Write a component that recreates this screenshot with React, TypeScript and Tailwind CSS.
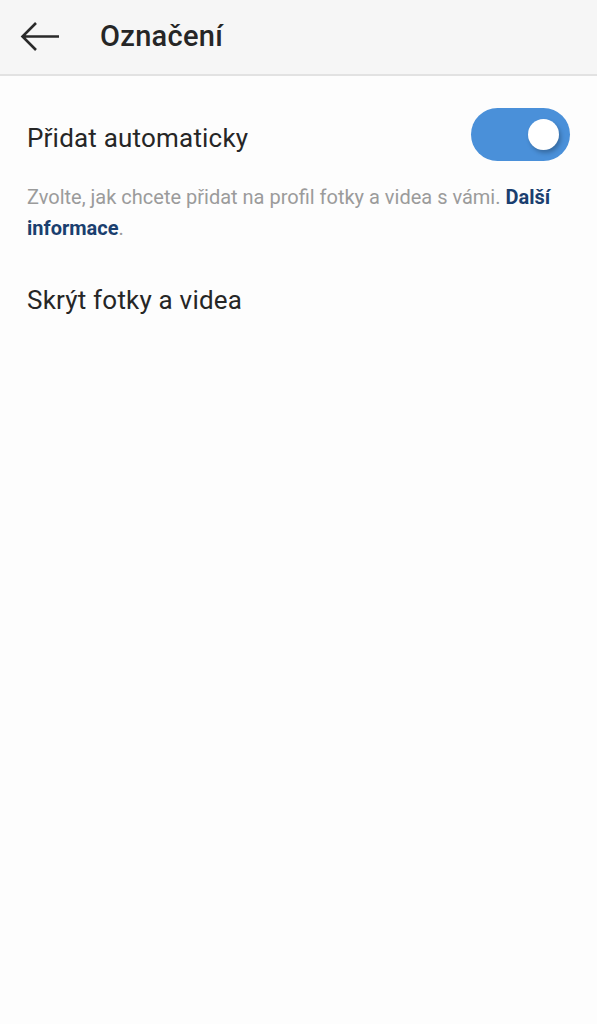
export default function App() {
  return (
    <div className="min-h-[1024px] bg-[#fdfdfd] font-['Roboto',sans-serif]">
      <header className="flex h-[76px] items-center bg-[#f6f6f6] border-b-2 border-[#e2e2e2]">
        <button className="ml-[18px] flex h-[40px] w-[44px] items-center justify-center">
          <svg width="42" height="32" viewBox="0 0 42 32" fill="none">
            <path d="M40 15.5H4M17 2L3.5 15.5L17 29" stroke="#2a2a2a" strokeWidth="2.6" />
          </svg>
        </button>
        <h1 className="ml-[38px] text-[29px] font-medium tracking-[0.3px] text-[#262626]">Označení</h1>
      </header>

      <div className="px-[27px]">
        <div className="flex items-center justify-between pt-[32px]">
          <span className="pt-[8px] text-[26px] tracking-[0.2px] text-[#262626]">Přidat automaticky</span>
          <div className="relative h-[53px] w-[99px] rounded-full bg-[#4a90d9]">
            <div className="absolute right-[11px] top-[11px] h-[31px] w-[31px] rounded-full bg-white shadow-[2px_3px_4px_rgba(0,0,0,0.25)]" />
          </div>
        </div>
        <p className="mt-[21px] text-[20px] leading-[31px] text-[#9b9b9b]">
          Zvolte, jak chcete přidat na profil fotky a videa s vámi.{' '}
          <span className="font-bold text-[#1a3f6f]">Další informace</span>.
        </p>
        <div className="mt-[37px] text-[26px] tracking-[0.2px] text-[#262626]">Skrýt fotky a videa</div>
      </div>
    </div>
  );
}
